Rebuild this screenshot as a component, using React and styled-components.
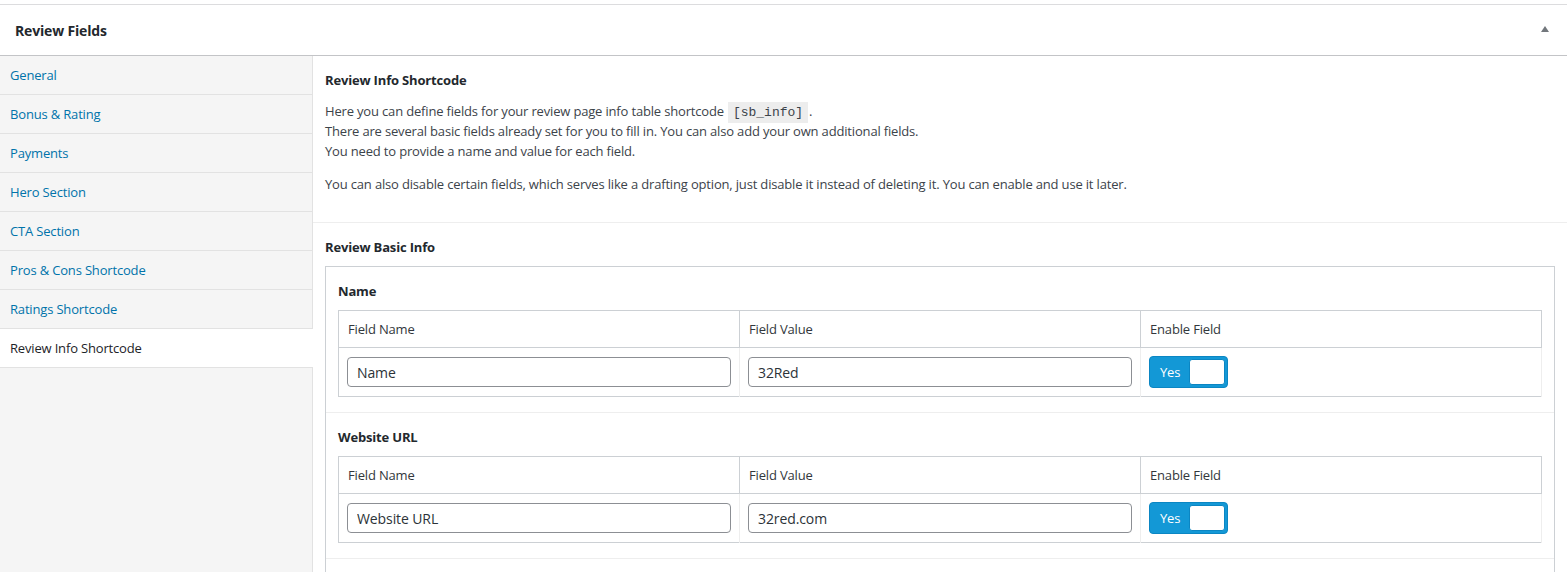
import React from 'react';
import styled, { createGlobalStyle } from 'styled-components';

const GlobalStyle = createGlobalStyle`
  html, body {
    margin: 0;
    padding: 0;
    background: #fff;
    overflow: hidden;
  }
  body {
    font-family: 'Open Sans', 'Noto Sans', sans-serif;
    font-size: 13px;
    letter-spacing: -0.17px;
    color: #3c434a;
  }
`;

const Page = styled.div`
  height: 100vh;
  overflow: hidden;
  padding-top: 4px;
  box-sizing: border-box;
`;

const Postbox = styled.div`
  border-top: 1px solid #dcdcde;
  background: #fff;
`;

const PostboxHeader = styled.div`
  display: flex;
  align-items: center;
  justify-content: space-between;
  height: 50px;
  padding: 0 18px 0 15px;
  border-bottom: 1px solid #c3c4c7;
`;

const HeaderTitle = styled.h2`
  margin: 0;
  font-size: 14px;
  font-weight: 700;
  color: #23282d;
`;

const CollapseArrow = styled.span`
  width: 0;
  height: 0;
  border-left: 4px solid transparent;
  border-right: 4px solid transparent;
  border-bottom: 6px solid #72777c;
  margin-top: -3px;
`;

const Body = styled.div`
  display: flex;
  align-items: stretch;
  min-height: 520px;
`;

const Sidebar = styled.ul`
  list-style: none;
  margin: 0;
  padding: 0;
  width: 313px;
  flex: none;
  box-sizing: border-box;
  background: #f5f5f5;
  border-right: 1px solid #e2e2e2;
`;

const TabItem = styled.li`
  display: flex;
  align-items: center;
  height: 38px;
  padding: 0 10px;
  border-bottom: 1px solid #e2e2e2;
  margin-right: ${(p) => (p.$active ? '-1px' : '0')};
  background: ${(p) => (p.$active ? '#fff' : 'transparent')};
  color: ${(p) => (p.$active ? '#1d2327' : '#0073aa')};
  cursor: pointer;
`;

const Panel = styled.div`
  flex: 1;
  min-width: 0;
`;

const Section = styled.div`
  padding: 14px 12px ${(p) => (p.$divided ? '15px' : '0')};
  border-bottom: ${(p) => (p.$divided ? '1px solid #eee' : 'none')};
`;

const SectionTitle = styled.h3`
  margin: 0 0 ${(p) => p.$gap || 11}px;
  font-size: 13px;
  line-height: 20px;
  font-weight: 700;
  color: #23282d;
`;

const Para = styled.p`
  margin: 0 0 13px;
  line-height: 20px;
`;

const Code = styled.code`
  font-family: 'Liberation Mono', 'DejaVu Sans Mono', monospace;
  font-size: 13px;
  line-height: 1;
  letter-spacing: 0;
  background: rgba(0, 0, 0, 0.07);
  padding: 3px 5px;
  margin: 0 1px 0 4px;
`;

const GroupBox = styled.div`
  border: 1px solid #ccd0d4;
  border-bottom: none;
  padding-bottom: 40px;
`;

const FieldBlock = styled.div`
  padding: 14px 12px 15px;
  border-bottom: 1px solid #eee;
`;

const FieldTable = styled.table`
  width: 100%;
  table-layout: fixed;
  border-collapse: collapse;
  border: 1px solid #ccd0d4;
`;

const HeadCell = styled.th`
  height: 36px;
  padding: 0 9px;
  text-align: left;
  font-weight: 400;
  font-size: 13px;
  color: #32373c;
  border-right: 1px solid #ccd0d4;
  border-bottom: 1px solid #ccd0d4;
`;

const Cell = styled.td`
  height: 48px;
  padding: 0 8px;
  border-right: 1px solid #eee;
`;

const TextInput = styled.input`
  display: block;
  width: 100%;
  height: 30px;
  box-sizing: border-box;
  padding: 0 9px;
  font-family: inherit;
  font-size: 14px;
  letter-spacing: -0.1px;
  color: #2c3338;
  border: 1px solid #8c8f94;
  border-radius: 4px;
  background: #fff;
  outline: none;
`;

const Switch = styled.div`
  display: flex;
  align-items: center;
  justify-content: space-between;
  width: 79px;
  height: 32px;
  box-sizing: border-box;
  padding: 0 2px 0 10px;
  background: #1398d6;
  border: 1px solid #0b86c3;
  border-radius: 4px;
  color: #fff;
  font-size: 13px;
`;

const Knob = styled.span`
  width: 36px;
  height: 26px;
  box-sizing: border-box;
  background: #fff;
  border: 1px solid #0b86c3;
  border-radius: 3px;
`;

const tabs = [
  'General',
  'Bonus & Rating',
  'Payments',
  'Hero Section',
  'CTA Section',
  'Pros & Cons Shortcode',
  'Ratings Shortcode',
  'Review Info Shortcode',
];

const fields = [
  { title: 'Name', name: 'Name', value: '32Red' },
  { title: 'Website URL', name: 'Website URL', value: '32red.com' },
];

function FieldRow({ field }) {
  return (
    <FieldBlock>
      <SectionTitle $gap={9}>{field.title}</SectionTitle>
      <FieldTable>
        <thead>
          <tr>
            <HeadCell>Field Name</HeadCell>
            <HeadCell>Field Value</HeadCell>
            <HeadCell>Enable Field</HeadCell>
          </tr>
        </thead>
        <tbody>
          <tr>
            <Cell>
              <TextInput defaultValue={field.name} />
            </Cell>
            <Cell>
              <TextInput defaultValue={field.value} />
            </Cell>
            <Cell>
              <Switch>
                Yes
                <Knob />
              </Switch>
            </Cell>
          </tr>
        </tbody>
      </FieldTable>
    </FieldBlock>
  );
}

export default function App() {
  return (
    <Page>
      <GlobalStyle />
      <Postbox>
        <PostboxHeader>
          <HeaderTitle>Review Fields</HeaderTitle>
          <CollapseArrow />
        </PostboxHeader>
        <Body>
          <Sidebar>
            {tabs.map((t) => (
              <TabItem key={t} $active={t === 'Review Info Shortcode'}>
                {t}
              </TabItem>
            ))}
          </Sidebar>
          <Panel>
            <Section $divided>
              <SectionTitle>Review Info Shortcode</SectionTitle>
              <Para>
                Here you can define fields for your review page info table shortcode
                <Code>[sb_info]</Code>.
                <br />
                There are several basic fields already set for you to fill in. You can also add
                your own additional fields.
                <br />
                You need to provide a name and value for each field.
              </Para>
              <Para>
                You can also disable certain fields, which serves like a drafting option, just
                disable it instead of deleting it. You can enable and use it later.
              </Para>
            </Section>
            <Section>
              <SectionTitle $gap={9}>Review Basic Info</SectionTitle>
              <GroupBox>
                {fields.map((f) => (
                  <FieldRow key={f.title} field={f} />
                ))}
              </GroupBox>
            </Section>
          </Panel>
        </Body>
      </Postbox>
    </Page>
  );
}
